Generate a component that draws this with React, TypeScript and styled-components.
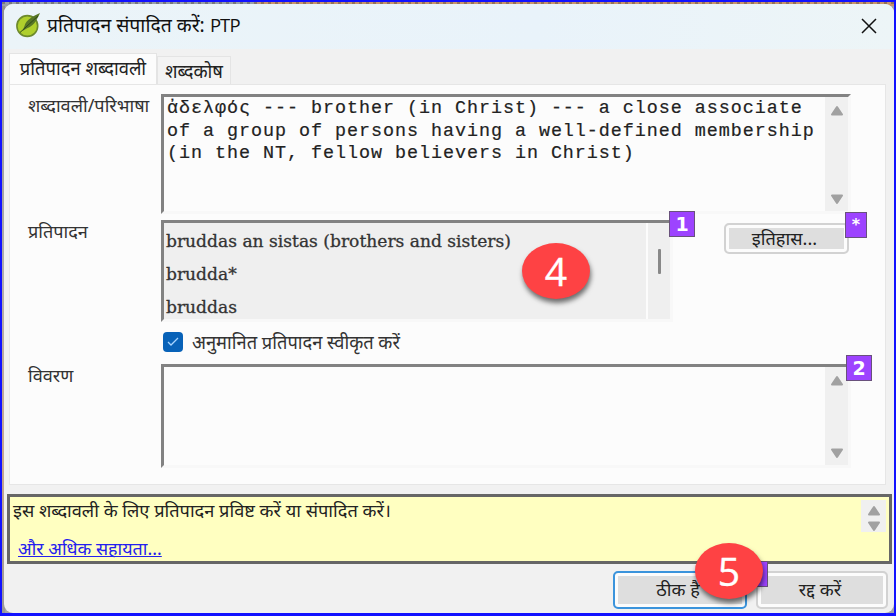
import React from "react";
import styled, { createGlobalStyle } from "styled-components";

const UI = '"Noto Sans", "Noto Sans Devanagari", "Open Sans", sans-serif';

const Global = createGlobalStyle`
  *{box-sizing:border-box}
  html,body{margin:0;padding:0;background:#8f8a86;overflow:hidden}
  body{font-family:${UI};color:#222}
`;

const Desktop = styled.div`
  position:relative;width:896px;height:616px;
  border:2px solid #1212ff;border-bottom-width:3px;
  padding:2px 0 0 2px;
  background:
    repeating-linear-gradient(90deg,rgba(70,60,60,.4) 0 3px,transparent 3px 7px) top/100% 2px no-repeat,
    linear-gradient(90deg,#98a0a8 0 28%,#c8956b 29% 100%) top/100% 4px no-repeat,
    linear-gradient(#8f8f8f,#b0aeac 45%,#c9a68c 75%,#999) left/3px 100% no-repeat,#a5a5a5;
`;
const Dialog = styled.main`
  width:890px;height:609px;background:#f1f1f1;border-radius:9px;overflow:hidden;
  display:flex;flex-direction:column;
`;
const TitleBar = styled.header`
  height:45px;flex:none;background:linear-gradient(90deg,#ebf4f8,#e9f3fa 60%,#edf5f7);
  display:flex;align-items:center;padding:0 17px 2px 12px;
`;
const Title = styled.h1`
  margin:0 auto 0 6px;font-size:19.4px;font-weight:400;line-height:42px;height:44px;color:#111;white-space:nowrap;
`;
const Latin = styled.span`font:18.5px "Open Sans",sans-serif;letter-spacing:-.9px;`;
const Tabs = styled.nav`
  height:35px;flex:none;padding:4px 0 0 5px;display:flex;align-items:flex-end;
`;
const Tab = styled.span<{ $active?: boolean }>`
  width:${p => (p.$active ? 148 : 74)}px;height:${p => (p.$active ? 31 : 28)}px;
  border:1px solid #e4e4e4;border-bottom:0;
  background:${p => (p.$active ? "#fcfcfc" : "#f3f3f3")};
  font-size:18.4px;line-height:28px;text-align:center;white-space:nowrap;
`;
const Panel = styled.section`
  width:877px;height:401px;flex:none;margin-left:5px;background:#fcfcfc;border:1px solid #e6e6e6;
  padding:9px 0 0 18px;display:grid;grid-template-columns:133px 512px 1fr;
  grid-template-rows:126px 144px 104px;
`;
const Label = styled.label`
  font-size:18.1px;line-height:22px;white-space:nowrap;color:#333;
`;
const Field = styled.div<{ $w: number; $h: number; $grey?: boolean; $wide?: boolean }>`
  width:${p => p.$w}px;height:${p => p.$h}px;display:flex;
  grid-column:${p => (p.$wide ? "2 / 4" : "auto")};
  border-top:3px solid #828282;border-left:3px solid #828282;
  border-right:3px solid #f8f8f8;border-bottom:3px solid #f8f8f8;
  background:${p => (p.$grey ? "#efefef" : "#fcfcfc")};
`;
const Definition = styled.div`
  flex:1;padding:1px 0 0 3px;font:18.4px/22.5px "Liberation Mono",monospace;
  letter-spacing:.96px;color:#222;white-space:pre;-webkit-text-stroke:.2px #222;
`;
const Renderings = styled.div`
  width:482px;padding:2px 0 0 2px;
  font:17.1px/33px "DejaVu Serif",serif;color:#333;white-space:nowrap;overflow:hidden;
  -webkit-text-stroke:.3px #333;
`;
const Splitter = styled.div`width:2px;background:#fcfcfc;`;
const Gutter = styled.div`flex:1;padding:26px 0 0 10px;`;
const Thumb = styled.div`width:3px;height:25px;background:#888;border-radius:1px;`;
const Scroll = styled.div<{ $small?: boolean }>`
  width:${p => (p.$small ? 25 : 23)}px;height:${p => (p.$small ? "32px" : "auto")};
  margin-left:auto;background:#f0f0f0;display:flex;flex-direction:column;
  align-items:center;justify-content:space-between;
  padding:${p => (p.$small ? "5px 0 0" : "8px 0 6px")};
`;
const Middle = styled.div``;
const Accept = styled.div`
  display:flex;align-items:center;height:24px;margin:8px 0 0 2px;font-size:18.3px;white-space:nowrap;color:#333;
`;
const Caption = styled.span`margin-top:-2px;`;
const Check = styled.span`
  width:20px;height:20px;border-radius:4px;background:#0862b8;margin-right:9px;display:flex;align-items:center;justify-content:center;
`;
const Button = styled.button<{ $w: number; $h: number; $primary?: boolean }>`
  width:${p => p.$w}px;height:${p => p.$h}px;padding:0 4px 2px 0;
  border:${p => (p.$primary ? "2px solid #3b94dc" : "2px solid #d2d2d2")};border-radius:5px;
  background:#dedede;box-shadow:inset 0 0 0 3px #fcfcfc;
  font:18.2px/20px ${UI};color:#222;white-space:nowrap;
`;
const Side = styled.div`padding:3px 0 0 51px;`;
const Help = styled.section`
  width:885px;height:70px;flex:none;margin:9px 0 0 3px;border:3px solid #666;background:#ffffc1;
  display:flex;padding:3px 3px 0 3px;
`;
const HelpText = styled.div`flex:1;font-size:18.2px;line-height:20px;color:#222;`;
const Link = styled.a`
  display:block;width:max-content;margin:18px 0 0 5px;color:#2420ee;text-decoration:underline;
  text-decoration-skip-ink:none;font-size:17.9px;
`;
const Footer = styled.footer`
  display:flex;justify-content:flex-end;gap:9px;padding:7px 6px 0 0;
`;
const Badge = styled.span<{ $x: number; $y: number; $w: number; $star?: boolean }>`
  position:absolute;left:${p => p.$x - 2}px;top:${p => p.$y - 2}px;width:${p => p.$w}px;height:26px;
  background:#9d43ff;border:1px solid #69517c;color:#fff;
  font:bold ${p => (p.$star ? 16 : 19)}px/24px "DejaVu Sans",sans-serif;text-align:center;
`;
const Step = styled.span<{ $x: number; $y: number }>`
  position:absolute;left:${p => p.$x - 2}px;top:${p => p.$y - 2}px;width:68px;height:56px;border-radius:50%;
  background:#fe4244;color:#fff;font:39px/56px "Open Sans",sans-serif;text-align:center;
  -webkit-text-stroke:.4px #fff;
  box-shadow:1px 4px 5px rgba(0,0,0,.55);
`;

const Arrow = ({ down }: { down?: boolean }) => (
  <svg width="14" height="11" viewBox="0 0 14 11">
    <path d="M7 2 12 9.5H2Z" fill="#a1a1a1" stroke="#a1a1a1" strokeWidth="2" strokeLinejoin="round"
      transform={down ? "rotate(180 7 5.5)" : undefined} />
  </svg>
);
const Logo = () => (
  <svg width="25" height="25" viewBox="0 0 25 25">
    <circle cx="11.3" cy="13" r="10.4" fill="#afcf2c" stroke="#6d8a2c" strokeWidth="1.6" />
    <path d="M24 0C17 3 10 7 8.500 13l-2 5 5-3C17 13 20 9 24 0Z" fill="#577626" />
    <path d="M4 19.500 22 3" stroke="#30491a" strokeWidth="1" />
  </svg>
);

export default function App() {
  return (
    <Desktop>
      <Global />
      <Dialog>
        <TitleBar>
          <Logo />
          <Title>प्रतिपादन संपादित करें: <Latin>PTP</Latin></Title>
          <svg width="16" height="16" viewBox="0 0 16 16"><path d="M1 1 15 15M15 1 1 15" stroke="#111" strokeWidth="1.5" /></svg>
        </TitleBar>
        <Tabs>
          <Tab $active>प्रतिपादन शब्दावली</Tab>
          <Tab>शब्दकोष</Tab>
        </Tabs>
        <Panel>
          <Label>शब्दावली/परिभाषा</Label>
          <Field $w={690} $h={120} $wide>
            <Definition>{"ἀδελφός --- brother (in Christ) --- a close associate\nof a group of persons having a well-defined membership\n(in the NT, fellow believers in Christ)"}</Definition>
            <Scroll><Arrow /><Arrow down /></Scroll>
          </Field>
          <Label>प्रतिपादन</Label>
          <Middle>
            <Field $w={512} $h={102} $grey>
              <Renderings>
                <div>bruddas an sistas (brothers and sisters)</div>
                <div>brudda*</div>
                <div>bruddas</div>
              </Renderings>
              <Splitter />
              <Gutter><Thumb /></Gutter>
            </Field>
            <Accept>
              <Check><svg width="12" height="10" viewBox="0 0 12 10"><path d="m1 5 3 3 7-7" fill="none" stroke="#a8d5ff" strokeWidth="1.3" /></svg></Check>
              <Caption>अनुमानित प्रतिपादन स्वीकृत करें</Caption>
            </Accept>
          </Middle>
          <Side><Button $w={125} $h={31}>इतिहास...</Button></Side>
          <Label>विवरण</Label>
          <Field $w={690} $h={104} $wide><Scroll><Arrow /><Arrow down /></Scroll></Field>
        </Panel>
        <Help>
          <HelpText>
            इस शब्दावली के लिए प्रतिपादन प्रविष्ट करें या संपादित करें।
            <Link>और अधिक सहायता...</Link>
          </HelpText>
          <Scroll $small><Arrow /><Arrow down /></Scroll>
        </Help>
        <Footer>
          <Button $w={134} $h={38} $primary>ठीक है</Button>
          <Button $w={132} $h={38}>रद्द करें</Button>
        </Footer>
      </Dialog>
      <Badge $x={669} $y={211} $w={26}>1</Badge>
      <Badge $x={845} $y={212} $w={22} $star>*</Badge>
      <Badge $x={846} $y={355} $w={26}>2</Badge>
      <Badge $x={742} $y={561} $w={26} />
      <Step $x={522} $y={243}>4</Step>
      <Step $x={695} $y={543}>5</Step>
    </Desktop>
  );
}
